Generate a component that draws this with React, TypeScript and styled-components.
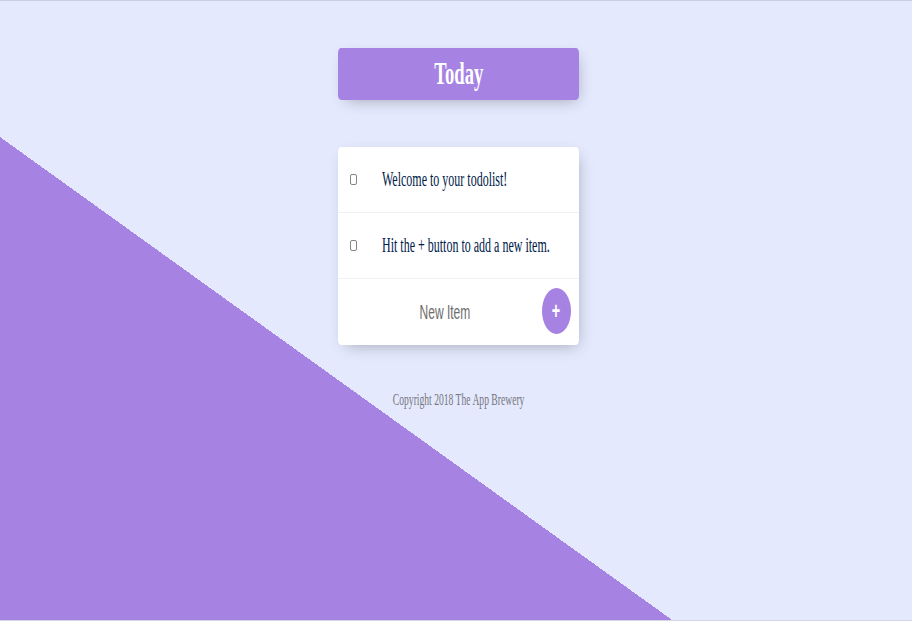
import React from "react";
import styled, { createGlobalStyle } from "styled-components";

const Global = createGlobalStyle`
  html, body { margin: 0; padding: 0; }
  body { font-family: "Liberation Serif", "Times New Roman", serif; }
`;

const Page = styled.div`
  box-sizing: border-box;
  width: 100%;
  height: 100vh;
  border-top: 1px solid #c9cde0;
  border-bottom: 1px solid #d3d6e6;
  background-color: #e4e9fd;
  background-image: linear-gradient(35.7deg, #a683e3 37.9%, #e4e9fd 37.9%);
  display: flex;
  flex-direction: column;
  align-items: center;
  padding: 47px 0 0 5px;
  overflow: hidden;
`;

const Squash = styled.span<{ $origin?: string }>`
  display: inline-block;
  white-space: nowrap;
  flex-shrink: 0;
  transform: scaleX(0.6);
  transform-origin: ${(p) => p.$origin ?? "center"};
`;

const Heading = styled.div`
  width: 241px;
  height: 52px;
  background: #a683e3;
  border-radius: 3px / 5px;
  box-shadow: 3px 5px 15px -5px rgba(0, 0, 0, 0.3);
  display: flex;
  align-items: center;
  justify-content: center;
`;

const Title = styled.h1`
  margin: 0;
  color: #ffffff;
  font-family: "Liberation Serif", "Times New Roman", serif;
  font-weight: 700;
  font-size: 31px;
  line-height: 32px;
`;

const Card = styled.div`
  width: 241px;
  margin-top: 47px;
  background: #ffffff;
  border-radius: 3px / 5px;
  box-shadow: 3px 5px 15px -5px rgba(0, 0, 0, 0.3);
`;

const Item = styled.div`
  box-sizing: border-box;
  height: 66px;
  display: flex;
  align-items: center;
  border-bottom: 1px solid #f1f1f1;
`;

const Check = styled.input`
  appearance: none;
  box-sizing: border-box;
  width: 7px;
  height: 11px;
  margin: 0 0 0 12px;
  border: 1px solid #858585;
  border-radius: 2px;
  background: #fff;
  flex-shrink: 0;
`;

const ItemText = styled.p`
  margin: 0 0 0 25px;
  font-size: 20px;
  color: #00204a;
  font-family: "Liberation Serif", "Times New Roman", serif;
  display: flex;
`;

const Form = styled.form`
  box-sizing: border-box;
  height: 66px;
  margin: 0;
  display: flex;
  align-items: center;
`;

const NewInput = styled.input`
  box-sizing: border-box;
  width: 313px;
  height: 60px;
  margin: 0 -125px 0 13px;
  padding: 0;
  border: none;
  outline: none;
  background: transparent;
  text-align: center;
  font-family: "Liberation Sans", Arial, sans-serif;
  font-size: 20px;
  font-weight: 200;
  transform: scaleX(0.6);
  transform-origin: left center;
  flex-shrink: 0;
  &::placeholder {
    color: #6c6c6c;
  }
`;

const AddButton = styled.button`
  width: 29px;
  height: 46px;
  margin: -2px 0 0 3px;
  padding: 0;
  border: 0;
  border-radius: 50%;
  background: #a683e3;
  color: #ffffff;
  display: flex;
  align-items: center;
  justify-content: center;
  font-family: "Liberation Sans", Arial, sans-serif;
  font-size: 24px;
  font-weight: 700;
  line-height: 1;
  flex-shrink: 0;
`;

const Footer = styled.footer`
  margin-top: 45px;
  color: #767680;
  font-family: "Liberation Serif", "Times New Roman", serif;
  font-size: 16px;
  line-height: 20px;
  text-align: center;
`;

const items = ["Welcome to your todolist!", "Hit the + button to add a new item."];

export default function App() {
  return (
    <>
      <Global />
      <Page>
        <Heading>
          <Title>
            <Squash>Today</Squash>
          </Title>
        </Heading>
        <Card>
          {items.map((t) => (
            <Item key={t}>
              <Check type="checkbox" />
              <ItemText>
                <Squash $origin="left center">{t}</Squash>
              </ItemText>
            </Item>
          ))}
          <Form onSubmit={(e) => e.preventDefault()}>
            <NewInput type="text" placeholder="New Item" />
            <AddButton type="submit">
              <Squash>+</Squash>
            </AddButton>
          </Form>
        </Card>
        <Footer>
          <Squash>Copyright 2018 The App Brewery</Squash>
        </Footer>
      </Page>
    </>
  );
}
